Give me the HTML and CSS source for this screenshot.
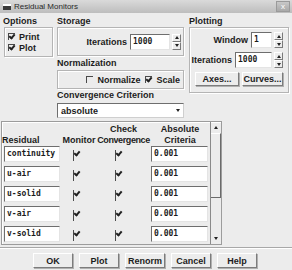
FILE: index.html
```html
<!DOCTYPE html>
<html lang="en">
<head>
    <meta charset="UTF-8">
    <title>Residual Monitors</title>
    <link rel="stylesheet" href="styles.css">
</head>
<body>
    <div class="dialog">
        <div class="titlebar">
            <span class="app-icon"></span>
            <span class="title">Residual Monitors</span>
            <span class="close">x</span>
        </div>

        <div class="top">
            <div class="col-options">
                <div class="group-label">Options</div>
                <div class="frame options-frame">
                    <div class="check"><span class="cb on"></span>Print</div>
                    <div class="check"><span class="cb on"></span>Plot</div>
                </div>
            </div>

            <div class="col-mid">
                <div class="group-label">Storage</div>
                <div class="frame storage-frame">
                    <span>Iterations</span>
                    <span class="input iter-input">1000</span>
                    <span class="spin"><span class="up"></span><span class="dn"></span></span>
                </div>
                <div class="group-label norm-label">Normalization</div>
                <div class="frame norm-frame">
                    <div class="check"><span class="cb"></span>Normalize</div>
                    <div class="check"><span class="cb on"></span>Scale</div>
                </div>
                <div class="group-label">Convergence Criterion</div>
                <div class="select">absolute<span class="arrow"></span></div>
            </div>

            <div class="col-plot">
                <div class="group-label">Plotting</div>
                <div class="frame plot-frame">
                    <div class="plot-row">
                        <span>Window</span>
                        <span class="input win-input">1</span>
                        <span class="spin"><span class="up"></span><span class="dn"></span></span>
                    </div>
                    <div class="plot-row">
                        <span>Iterations</span>
                        <span class="input iter-input2">1000</span>
                        <span class="spin"><span class="up"></span><span class="dn"></span></span>
                    </div>
                    <div class="plot-row plot-buttons">
                        <span class="btn axes">Axes...</span>
                        <span class="btn curves">Curves...</span>
                    </div>
                </div>
            </div>
        </div>

        <div class="table-frame">
            <div class="table">
                <div class="head">
                    <span></span><span></span><span class="c">Check</span><span class="c abs">Absolute</span>
                    <span>Residual</span><span class="c">Monitor</span><span class="c conv">Convergence</span><span class="c">Criteria</span>
                </div>
                <div class="row">
                    <span class="input name">continuity</span>
                    <span class="cell-mon"><span class="cb on"></span></span>
                    <span class="cell-conv"><span class="cb on"></span></span>
                    <span class="input crit">0.001</span>
                </div>
                <div class="row">
                    <span class="input name">u-air</span>
                    <span class="cell-mon"><span class="cb on"></span></span>
                    <span class="cell-conv"><span class="cb on"></span></span>
                    <span class="input crit">0.001</span>
                </div>
                <div class="row">
                    <span class="input name">u-solid</span>
                    <span class="cell-mon"><span class="cb on"></span></span>
                    <span class="cell-conv"><span class="cb on"></span></span>
                    <span class="input crit">0.001</span>
                </div>
                <div class="row">
                    <span class="input name">v-air</span>
                    <span class="cell-mon"><span class="cb on"></span></span>
                    <span class="cell-conv"><span class="cb on"></span></span>
                    <span class="input crit">0.001</span>
                </div>
                <div class="row">
                    <span class="input name">v-solid</span>
                    <span class="cell-mon"><span class="cb on"></span></span>
                    <span class="cell-conv"><span class="cb on"></span></span>
                    <span class="input crit">0.001</span>
                </div>
            </div>
            <div class="scrollbar">
                <span class="sb-btn"><span class="tri-up"></span></span>
                <span class="thumb"></span>
                <span class="track"></span>
                <span class="sb-btn"><span class="tri-dn"></span></span>
            </div>
        </div>

        <div class="separator"></div>

        <div class="actions">
            <span class="btn">OK</span>
            <span class="btn">Plot</span>
            <span class="btn">Renorm</span>
            <span class="btn">Cancel</span>
            <span class="btn">Help</span>
        </div>
    </div>
</body>
</html>
```

FILE: styles.css
```css
* {
    box-sizing: border-box;
}

body {
    margin: 0;
    background: #ececec;
    font-family: "Liberation Sans", Arial, sans-serif;
    font-size: 9px;
    font-weight: bold;
    color: #1c1c1c;
}

.dialog {
    width: 292px;
    height: 270px;
    overflow: hidden;
}

/* title bar */
.titlebar {
    height: 13px;
    display: flex;
    align-items: center;
    padding: 0 2px 0 3px;
    background: linear-gradient(#dadada, #bdbdbd);
    font-size: 8px;
    font-weight: normal;
    color: #2a2a2a;
}

.app-icon {
    width: 8px;
    height: 6px;
    margin-right: 3px;
    background: #3a3a3a;
    border-top: 2px solid #fff;
}

.title {
    flex: 1;
}

.close {
    width: 14px;
    height: 11px;
    line-height: 9px;
    text-align: center;
    color: #fff;
    font-size: 8px;
    background: linear-gradient(#c8c8c8, #a9a9a9);
    border: 1px solid #9a9a9a;
}

/* top area */
.top {
    display: flex;
    height: 105px;
    padding-top: 2px;
}

.group-label {
    height: 12px;
    line-height: 12px;
}

.frame {
    border: 1px solid #b4b4b4;
    box-shadow: inset 1px 1px 0 #fff, 1px 1px 0 #fff;
}

.col-options {
    width: 54px;
    padding-left: 3px;
}

.options-frame {
    width: 49px;
    height: 30px;
    margin-left: 1px;
    padding: 3px 0 0 3px;
}

.check {
    display: flex;
    align-items: center;
    height: 11px;
}

.cb {
    width: 7px;
    height: 7px;
    margin-right: 4px;
    border-top: 1px solid #4a4a4a;
    border-left: 1px solid #4a4a4a;
    position: relative;
}

.cb.on::after {
    content: "";
    position: absolute;
    left: 1px;
    top: -1px;
    width: 2px;
    height: 4px;
    border-right: 2px solid #222;
    border-bottom: 2px solid #222;
    transform: rotate(40deg);
}

.col-mid {
    width: 127px;
    margin-left: 3px;
}

.storage-frame {
    height: 29px;
    display: flex;
    align-items: center;
    justify-content: flex-end;
    padding-right: 2px;
}

.input {
    display: inline-block;
    height: 16px;
    line-height: 14px;
    padding-left: 2px;
    background: #fff;
    border-top: 1px solid #6e6e6e;
    border-left: 1px solid #6e6e6e;
    border-bottom: 1px solid #e4e4e4;
    border-right: 1px solid #e4e4e4;
    font-family: "DejaVu Sans Mono", "Liberation Mono", monospace;
    font-size: 8px;
    font-weight: bold;
}

.iter-input {
    width: 40px;
    margin: 0 2px 0 3px;
}

.spin {
    display: flex;
    flex-direction: column;
    width: 9px;
    height: 16px;
}

.spin .up,
.spin .dn {
    height: 8px;
    display: flex;
    align-items: center;
    justify-content: center;
    border-right: 1px solid #7a7a7a;
    border-bottom: 1px solid #7a7a7a;
    border-top: 1px solid #fff;
    border-left: 1px solid #fff;
}

.spin .up::before {
    content: "";
    border-left: 2px solid transparent;
    border-right: 2px solid transparent;
    border-bottom: 3px solid #222;
}

.spin .dn::before {
    content: "";
    border-left: 2px solid transparent;
    border-right: 2px solid transparent;
    border-top: 3px solid #222;
}

.norm-label {
    margin-top: 1px;
}

.norm-frame {
    height: 19px;
    margin-top: 1px;
    display: flex;
    align-items: center;
    justify-content: flex-end;
    gap: 5px;
    padding-right: 3px;
}

.select {
    height: 15px;
    margin-top: 2px;
    padding-left: 3px;
    display: flex;
    align-items: center;
    justify-content: space-between;
    background: #fff;
    border-top: 1px solid #6e6e6e;
    border-left: 1px solid #6e6e6e;
    border-bottom: 1px solid #cfcfcf;
    border-right: 1px solid #cfcfcf;
}

.select .arrow {
    width: 9px;
    height: 9px;
    margin-right: 1px;
    display: flex;
    align-items: center;
    justify-content: center;
}

.select .arrow::before {
    content: "";
    border-left: 2px solid transparent;
    border-right: 2px solid transparent;
    border-top: 3px solid #222;
}

.col-plot {
    width: 100px;
    margin-left: 5px;
}

.plot-frame {
    height: 66px;
    padding: 4px 5px 0 0;
}

.plot-row {
    display: flex;
    align-items: center;
    justify-content: flex-end;
    height: 16px;
    margin-bottom: 4px;
}

.win-input {
    width: 21px;
    margin: 0 2px 0 3px;
}

.iter-input2 {
    width: 37px;
    margin: 0 2px 0 3px;
}

.plot-buttons {
    height: 13px;
    margin-top: 4px;
    gap: 3px;
}

.btn {
    display: inline-flex;
    align-items: center;
    justify-content: center;
    height: 14px;
    border-top: 1px solid #fff;
    border-left: 1px solid #fff;
    border-right: 1px solid #7c7c7c;
    border-bottom: 1px solid #7c7c7c;
    box-shadow: 1px 1px 0 #b0b0b0;
}

.axes {
    width: 44px;
}

.curves {
    width: 41px;
}

/* residual table */
.table-frame {
    display: flex;
    width: 221px;
    height: 124px;
    margin: 3px 0 0 1px;
    border: 1px solid #9c9c9c;
    box-shadow: inset 1px 1px 0 #fff;
    overflow: hidden;
}

.table {
    flex: 1;
    padding-top: 2px;
}

.head {
    display: grid;
    grid-template-columns: 60px 34px 55px 58px;
    grid-auto-rows: 11px;
    line-height: 11px;
}

.head .c {
    text-align: center;
}

.head .conv {
    letter-spacing: -0.4px;
}

.row {
    display: grid;
    grid-template-columns: 60px 34px 55px 58px;
    height: 20px;
}

.row .name {
    width: 56px;
    margin-left: 2px;
}

.cell-mon {
    padding: 5px 0 0 11px;
}

.cell-conv {
    padding: 5px 0 0 19px;
}

.row .crit {
    width: 57px;
}

.scrollbar {
    width: 11px;
    display: flex;
    flex-direction: column;
    border-left: 1px solid #8a8a8a;
}

.sb-btn {
    height: 11px;
    display: flex;
    align-items: center;
    justify-content: center;
}

.tri-up {
    border-left: 2px solid transparent;
    border-right: 2px solid transparent;
    border-bottom: 3px solid #222;
}

.tri-dn {
    border-left: 2px solid transparent;
    border-right: 2px solid transparent;
    border-top: 3px solid #222;
}

.thumb {
    height: 65px;
    border-right: 1px solid #6a6a6a;
    border-bottom: 1px solid #6a6a6a;
    border-top: 1px solid #fff;
}

.track {
    flex: 1;
}

.separator {
    height: 2px;
    margin-top: 2px;
    border-top: 1px solid #a8a8a8;
    border-bottom: 1px solid #fff;
}

.actions {
    display: flex;
    gap: 6px;
    padding-left: 33px;
    margin-top: 4px;
}

.actions .btn {
    width: 40px;
    height: 15px;
}
```
